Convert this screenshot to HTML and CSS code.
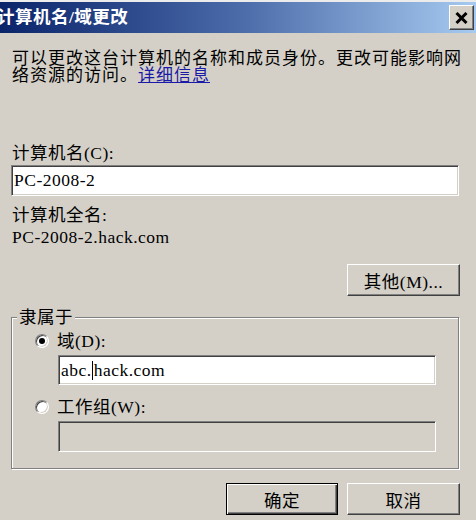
FILE: index.html
```html
<!DOCTYPE html>
<html lang="zh-CN">
<head>
<meta charset="utf-8">
<link rel="stylesheet" href="styles.css">
</head>
<body>
<div class="window">
  <div class="titlebar">
    <span class="title">计算机名/域更改</span>
    <span class="close"><svg width="13" height="12" viewBox="0 0 13 12"><path d="M1.5 1 L11.5 11 M11.5 1 L1.5 11" stroke="#000" stroke-width="3" fill="none"/></svg></span>
  </div>
  <div class="content">
    <p class="desc">可以更改这台计算机的名称和成员身份。更改可能影响网<br>络资源的访问。<a class="link" href="#">详细信息</a></p>
    <div class="label l1">计算机名(C):</div>
    <div class="field f1">PC-2008-2</div>
    <div class="label l2">计算机全名:</div>
    <div class="label value">PC-2008-2.hack.com</div>
    <div class="row-right"><span class="btn">其他(M)...</span></div>
    <fieldset class="group">
      <legend>隶属于</legend>
      <div class="group-inner">
        <div class="radio-row"><span class="radio checked"></span><span>域(D):</span></div>
        <div class="field f-domain">abc.<span class="caret"></span>hack.com</div>
        <div class="radio-row r2"><span class="radio"></span><span>工作组(W):</span></div>
        <div class="field f-disabled"></div>
      </div>
    </fieldset>
    <div class="footer">
      <span class="btn default">确定</span>
      <span class="btn">取消</span>
    </div>
  </div>
</div>
</body>
</html>
```
FILE: styles.css
```css
html, body {
  margin: 0;
  padding: 0;
}
body {
  background: #d4d0c8;
  font-family: "Liberation Serif", "Noto Sans CJK SC", serif;
  font-size: 17.5px;
  letter-spacing: 0.5px;
  color: #000;
  width: 476px;
  height: 520px;
  overflow: hidden;
}
.window {
  border-top: 2px solid #ececec;
}
.titlebar {
  height: 31px;
  display: flex;
  align-items: center;
  justify-content: space-between;
  background: linear-gradient(to right, #0a246a 0%, #4a6aa8 50%, #a6caf0 100%);
  overflow: hidden;
}
.title {
  margin-left: -3px;
  color: #fff;
  font-weight: bold;
  white-space: nowrap;
  line-height: 31px;
}
.close {
  box-sizing: border-box;
  width: 25px;
  height: 25px;
  margin-right: 2px;
  background: #d4d0c8;
  border: 1px solid;
  border-color: #fff #404040 #404040 #fff;
  box-shadow: inset -1px -1px 0 #808080;
  display: flex;
  align-items: center;
  justify-content: center;
}
.content {
  padding: 0 16px 0 11px;
}
.desc {
  margin: 17px 0 0 1px;
  font-size: 17px;
  letter-spacing: 1px;
  line-height: 17px;
  white-space: nowrap;
}
.link {
  color: #1a1aa6;
  text-decoration: underline;
}
.label {
  line-height: 18px;
  padding-left: 1px;
}
.l1 { margin-top: 60px; }
.l2 { margin-top: 10px; }
.value { margin-top: 4px; }
.field {
  box-sizing: border-box;
  background: #fff;
  border: 1px solid;
  border-color: #808080 #fff #fff #808080;
  box-shadow: inset 1px 1px 0 #404040, inset -1px -1px 0 #d4d0c8;
  padding-left: 2px;
  display: flex;
  align-items: center;
  white-space: nowrap;
}
.f1 {
  margin-top: 3px;
  margin-right: 1px;
  height: 31px;
}
.row-right {
  margin-top: 18px;
  display: flex;
  justify-content: flex-end;
}
.btn {
  box-sizing: border-box;
  width: 113px;
  height: 32px;
  display: inline-flex;
  align-items: center;
  justify-content: center;
  border: 1px solid;
  border-color: #fff #404040 #404040 #fff;
  box-shadow: inset -1px -1px 0 #808080;
  background: #d4d0c8;
}
.btn.default {
  width: 112px;
  border: 1px solid #000;
  box-shadow: inset 1px 1px 0 #fff, inset -1px -1px 0 #404040, inset -2px -2px 0 #808080;
}
.group {
  margin: 12px 1px 0 0;
  padding: 0;
  min-width: 0;
  border: 1px solid #808080;
  box-shadow: 1px 1px 0 #fff, inset 1px 1px 0 #fff;
}
.group legend {
  margin-left: 5px;
  padding: 0 2px;
  line-height: 18px;
  background: #d4d0c8;
}
.group-inner {
  padding: 6px 22px 16px 23px;
}
.radio-row {
  display: flex;
  align-items: center;
  gap: 8px;
  line-height: 18px;
}
.r2 { margin-top: 13px; }
.radio {
  box-sizing: border-box;
  width: 14px;
  height: 14px;
  border-radius: 50%;
  background: #fff;
  border: 1px solid;
  border-color: #808080 #fff #fff #808080;
  box-shadow: inset 1px 1px 0 #404040, inset -1px -1px 0 #d4d0c8;
  display: flex;
  align-items: center;
  justify-content: center;
}
.radio.checked::after {
  content: "";
  width: 6px;
  height: 6px;
  border-radius: 50%;
  background: #000;
}
.f-domain {
  margin: 5px 0 0 23px;
  height: 30px;
}
.caret {
  display: inline-block;
  width: 1px;
  height: 19px;
  background: #000;
  margin-right: 1px;
}
.f-disabled {
  margin: 5px 0 0 23px;
  height: 31px;
  background: #d4d0c8;
}
.footer {
  margin-top: 14px;
  display: flex;
  justify-content: flex-end;
  gap: 9px;
}
```
